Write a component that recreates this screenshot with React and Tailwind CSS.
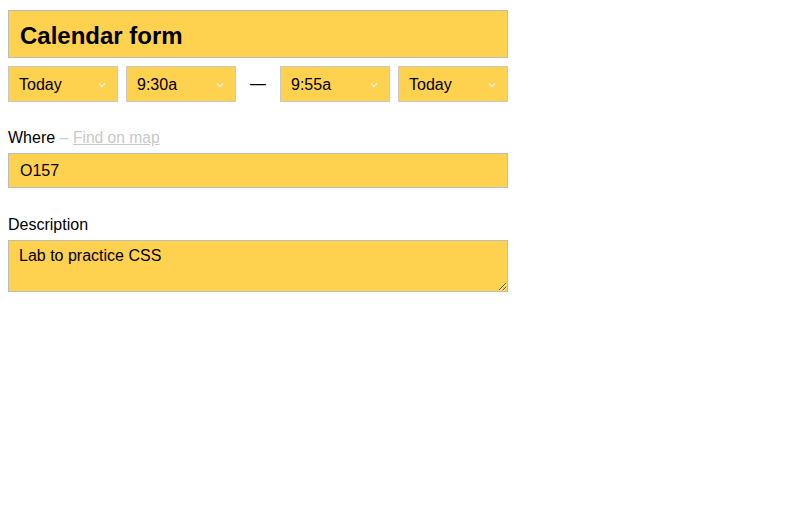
const font = { fontFamily: '"Liberation Sans", Arial, sans-serif' };

function Chevron() {
  return (
    <svg width="8" height="6" viewBox="0 0 8 6" className="shrink-0">
      <path d="M1 1.5 L4 4.5 L7 1.5" fill="none" stroke="#eeeeee" strokeWidth="1.3" />
    </svg>
  );
}

function Select({ value, width }) {
  return (
    <div className={`${width} h-[36px] bg-[#fed24e] border border-[#c8c8c8] flex items-center justify-between pl-[10px] pr-[11px] pt-[2px] text-[16px] text-black`}>
      <span>{value}</span>
      <Chevron />
    </div>
  );
}

export default function App() {
  return (
    <div className="bg-white min-h-screen w-full pt-[10px] px-[8px]" style={font}>
      <div className="w-[500px]">
        <div className="h-[48px] bg-[#fed24e] border border-[#bdbdbd] flex items-center px-[11px] pt-[3px]">
          <h1 className="text-[24px] font-bold text-black">Calendar form</h1>
        </div>

        <div className="flex items-center mt-[8px]">
          <Select value="Today" width="w-[110px]" />
          <div className="w-[8px]" />
          <Select value="9:30a" width="w-[110px]" />
          <div className="w-[44px] flex justify-center text-[16px] text-black">—</div>
          <Select value="9:55a" width="w-[110px]" />
          <div className="w-[8px]" />
          <Select value="Today" width="w-[110px]" />
        </div>

        <div className="mt-[27px] text-[16px] leading-[18px] text-black">
          Where <span className="text-[#cccccc]">–</span>{' '}
          <a href="#" className="text-[#c8c8c8] underline text-[15.6px]">Find on map</a>
        </div>
        <div className="mt-[6px] h-[35px] bg-[#fed24e] border border-[#bdbdbd] flex items-center px-[11px] text-[16px] text-black">
          O157
        </div>

        <div className="mt-[28px] text-[16px] leading-[18px] text-black">Description</div>
        <textarea
          readOnly
          defaultValue="Lab to practice CSS"
          className="mt-[6px] block w-[500px] h-[52px] bg-[#fed24e] border border-[#bdbdbd] px-[10px] pt-[6px] text-[16px] leading-[18px] text-black outline-none resize"
          style={font}
        />
      </div>
    </div>
  );
}
